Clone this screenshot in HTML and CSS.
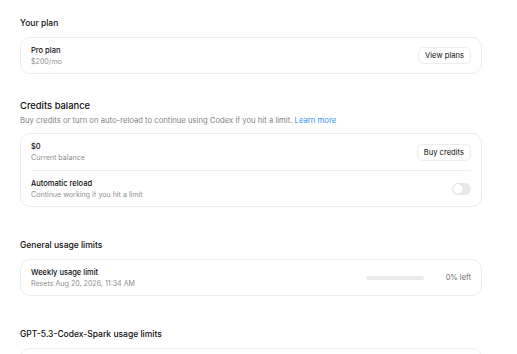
FILE: index.html
```html
<!DOCTYPE html>
<html lang="en">
<head>
    <meta charset="UTF-8">
    <meta name="viewport" content="width=device-width, initial-scale=1.0">
    <title>Usage</title>
    <link rel="stylesheet" href="styles.css">
</head>
<body>
    <div class="page">
        <section class="section first">
            <h2 class="section-title">Your plan</h2>
            <div class="card">
                <div class="row">
                    <div class="row-text">
                        <div class="row-title">Pro plan</div>
                        <div class="row-sub">$200/mo</div>
                    </div>
                    <button class="btn">View plans</button>
                </div>
            </div>
        </section>

        <section class="section credits">
            <h2 class="section-title big">Credits balance</h2>
            <p class="section-desc">Buy credits or turn on auto-reload to continue using Codex if you hit a limit. <a href="#" class="link">Learn more</a></p>
            <div class="card">
                <div class="row tall">
                    <div class="row-text">
                        <div class="row-title">$0</div>
                        <div class="row-sub">Current balance</div>
                    </div>
                    <button class="btn">Buy credits</button>
                </div>
                <div class="row divided">
                    <div class="row-text">
                        <div class="row-title">Automatic reload</div>
                        <div class="row-sub">Continue working if you hit a limit</div>
                    </div>
                    <span class="toggle"><span class="knob"></span></span>
                </div>
            </div>
        </section>

        <section class="section">
            <h2 class="section-title">General usage limits</h2>
            <div class="card">
                <div class="row">
                    <div class="row-text">
                        <div class="row-title">Weekly usage limit</div>
                        <div class="row-sub">Resets Aug 20, 2026, 11:34 AM</div>
                    </div>
                    <div class="usage">
                        <div class="bar"><div class="bar-fill" style="width: 0%;"></div></div>
                        <span class="usage-label">0% left</span>
                    </div>
                </div>
            </div>
        </section>

        <section class="section">
            <h2 class="section-title">GPT-5.3-Codex-Spark usage limits</h2>
            <div class="card">
                <div class="row"></div>
            </div>
        </section>
    </div>
</body>
</html>
```

FILE: styles.css
```css
body {
    margin: 0;
    background-color: #ffffff;
    font-family: Inter, "Noto Sans", sans-serif;
    color: #0d0d0d;
    -webkit-font-smoothing: antialiased;
}
.page {
    padding: 17px 35px 0 20px;
}
.section {
    margin-top: 32px;
}
.section.first {
    margin-top: 0;
}
.section.credits {
    margin-top: 25px;
}
.section-title {
    margin: 0 0 8px;
    font-size: 8.5px;
    font-weight: 500;
    line-height: 12px;
}
.section-title.big {
    font-size: 9.4px;
    margin-bottom: 2px;
    line-height: 14px;
}
.section-desc {
    margin: 0 0 6px;
    font-size: 7.7px;
    line-height: 12px;
    color: #858585;
}
.link {
    color: #3394f6;
    text-decoration: none;
}
.card {
    border: 1px solid #ececec;
    border-radius: 10px;
    padding: 0 10px;
}
.row {
    display: flex;
    align-items: center;
    justify-content: space-between;
    height: 35px;
}
.row.tall {
    height: 36px;
}
.row.divided {
    border-top: 1px solid #efefef;
}
.row-title {
    font-size: 7.5px;
    font-weight: 500;
    line-height: 11px;
}
.row-sub {
    font-size: 7.1px;
    line-height: 11px;
    color: #8f8f8f;
}
.btn {
    font-family: inherit;
    font-size: 7.6px;
    color: #0d0d0d;
    background-color: #ffffff;
    border: 1px solid #ececec;
    border-radius: 6px;
    padding: 0 6px;
    height: 17px;
}
.toggle {
    display: flex;
    align-items: center;
    width: 19px;
    height: 12px;
    border-radius: 6px;
    background-color: #e8e8e8;
    padding: 1px;
    box-sizing: border-box;
}
.knob {
    width: 10px;
    height: 10px;
    border-radius: 50%;
    background-color: #ffffff;
    box-shadow: 0 0 1px rgba(0,0,0,0.2);
}
.usage {
    display: flex;
    align-items: center;
    gap: 22px;
}
.bar {
    width: 58px;
    height: 4px;
    border-radius: 2px;
    background-color: #ebebeb;
    overflow: hidden;
}
.bar-fill {
    height: 100%;
    background-color: #0d0d0d;
}
.usage-label {
    font-size: 7.5px;
    color: #6e6e6e;
}
```
